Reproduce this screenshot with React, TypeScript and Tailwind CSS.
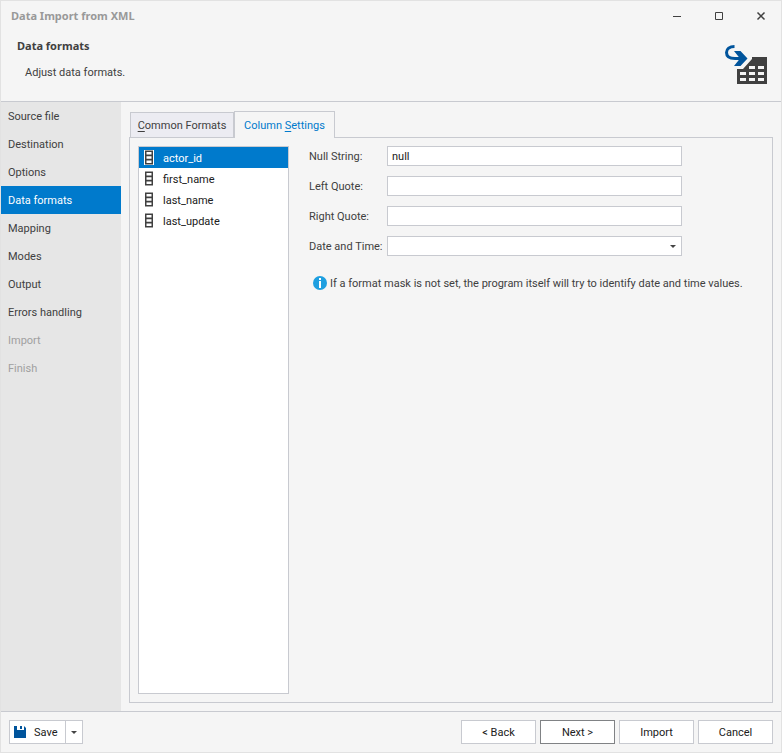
import clsx from "clsx";

const steps = [
  { name: "Source file" },
  { name: "Destination" },
  { name: "Options" },
  { name: "Data formats" },
  { name: "Mapping" },
  { name: "Modes" },
  { name: "Output" },
  { name: "Errors handling" },
  { name: "Import", disabled: true },
  { name: "Finish", disabled: true },
];

const columns = ["actor_id", "first_name", "last_name", "last_update"];

const textFields = [
  { id: "null-string", label: "Null String:", value: "null" },
  { id: "left-quote", label: "Left Quote:", value: "" },
  { id: "right-quote", label: "Right Quote:", value: "" },
];

const wizardButtons = ["< Back", "Next >", "Import", "Cancel"];

const ImportIcon = () => (
  <svg width="44" height="42" viewBox="0 0 44 42" aria-hidden="true">
    <path fill="#404040" d="M27 12H42V39H12V24H18L27 14Z" />
    <path
      fill="#f5f5f5"
      d="M24 21h6v3h-6zM33 21h6v3h-6zM15 27h6v3h-6zM24 27h6v3h-6zM33 27h6v3h-6zM15 33h6v3h-6zM24 33h6v3h-6zM33 33h6v3h-6z"
    />
    <path
      fill="none"
      stroke="#00549c"
      strokeWidth="3"
      d="M9.5 1.5C4.5 1.5 1.5 4 1.5 7.5C1.5 11.5 5 13.5 10 13.5H18"
    />
    <path fill="#00549c" d="M9 6H15.5L22.5 13.5L15.5 21H9L15 13.5Z" />
  </svg>
);

const ColumnIcon = ({ selected }: { selected: boolean }) => (
  <svg width="10" height="15" viewBox="0 0 10 15" aria-hidden="true">
    {selected && <path fill="#fff" d="M0 0h10v15H0z" />}
    <path fill="#404040" d="M1 0.500h8v14H1z" />
    <path fill="#fff" d="M2.5 2h5v2.500h-5zM2.5 6.200h5v2.500h-5zM2.5 10.400h5v2.500h-5z" />
  </svg>
);

const InfoIcon = () => (
  <svg
    className="shrink-0"
    width="14"
    height="14"
    viewBox="0 0 14 14"
    aria-hidden="true">
    <circle cx="7" cy="7" r="7" fill="#1e9fe0" />
    <path fill="#fff" d="M6 2h2v2H6zM6 5h2v7H6z" />
  </svg>
);

const SaveIcon = () => (
  <svg width="12" height="12" viewBox="0 0 12 12" aria-hidden="true">
    <path fill="#00549c" d="M0 0H3V4H10V0L12 2V12H0Z" />
    <path fill="#00549c" d="M6 0h2v3H6z" />
  </svg>
);

const Caret = () => (
  <svg width="6" height="3" viewBox="0 0 6 3" aria-hidden="true">
    <path fill="#444" d="M0 0h6L3 3z" />
  </svg>
);

const TitleBar = () => (
  <div className="flex h-[30px] items-center justify-between pl-2.5 pr-[15px]">
    <h1 className="font-['Noto_Sans',sans-serif] font-bold text-[#999]">
      Data Import from XML
    </h1>
    <div className="flex gap-8 text-[#404040]">
      <button type="button" aria-label="Minimize">
        <svg width="10" height="10" viewBox="0 0 10 10">
          <path fill="currentColor" d="M1 5h8v1H1z" />
        </svg>
      </button>
      <button type="button" aria-label="Maximize">
        <svg width="10" height="10" viewBox="0 0 10 10">
          <path fill="none" stroke="currentColor" d="M1.5 1.5h7v7h-7z" />
        </svg>
      </button>
      <button type="button" aria-label="Close">
        <svg width="10" height="10" viewBox="0 0 10 10">
          <path
            fill="none"
            stroke="currentColor"
            strokeWidth="1.5"
            d="M1.5 1.5l7 7M8.5 1.5l-7 7"
          />
        </svg>
      </button>
    </div>
  </div>
);

const Sidebar = () => (
  <nav className="w-[120px] shrink-0 bg-[#e6e6e6]">
    {steps.map((step) => (
      <button
        type="button"
        key={step.name}
        disabled={step.disabled}
        className={clsx(
          "block h-7 w-full pl-[7px] pt-0.5 text-left",
          step.name === "Data formats" && "bg-[#007acc] text-white",
          step.disabled && "text-[#a0a0a0]"
        )}>
        {step.name}
      </button>
    ))}
  </nav>
);

const SettingsForm = () => (
  <form className="flex min-w-0 flex-1 flex-col gap-2.5 pr-[82px]">
    {textFields.map((field) => (
      <div className="flex h-5 items-center" key={field.id}>
        <label
          htmlFor={field.id}
          className="w-[78px] shrink-0 whitespace-nowrap pt-0.5">
          {field.label}
        </label>
        <input
          id={field.id}
          type="text"
          defaultValue={field.value}
          className="h-5 w-full border border-[#c8cad0] bg-white px-1 text-[#202020]"
        />
      </div>
    ))}
    <div className="flex h-5 items-center">
      <label
        htmlFor="date-time"
        className="w-[78px] shrink-0 whitespace-nowrap pt-0.5">
        Date and Time:
      </label>
      <div className="relative w-full">
        <select
          id="date-time"
          className="block h-5 w-full appearance-none border border-[#c8cad0] bg-white px-1">
          <option value=""></option>
        </select>
        <span className="pointer-events-none absolute inset-y-0 right-1.5 flex items-center">
          <Caret />
        </span>
      </div>
    </div>
    <p className="mt-2 flex items-center gap-[3px] whitespace-nowrap pl-1">
      <InfoIcon />
      <span className="pt-0.5">
        If a format mask is not set, the program itself will try to identify
        date and time values.
      </span>
    </p>
  </form>
);

const App = () => {
  return (
    <div className="flex min-h-screen flex-col border border-[#e2e2e2] bg-[#f5f5f5] font-['Roboto',sans-serif] text-[11px] leading-4 text-[#404040]">
      <TitleBar />
      <header className="flex h-[71px] justify-between border-b border-[#c8cad0] pl-4 pr-3">
        <div className="pt-[7px]">
          <h2 className="font-['Noto_Sans',sans-serif] font-bold">Data formats</h2>
          <p className="mt-[11px] pl-2">Adjust data formats.</p>
        </div>
        <div className="pt-3.5">
          <ImportIcon />
        </div>
      </header>

      <div className="flex flex-1">
        <Sidebar />
        <main className="flex min-w-0 flex-1 flex-col px-2 pb-2 pt-[9px]">
          <div role="tablist" className="flex items-end">
            <button
              type="button"
              role="tab"
              aria-selected="false"
              className="ml-px h-[25px] w-[104px] border border-b-0 border-[#c8cad0] bg-[#ececf2] pt-0.5">
              <u className="underline-offset-2">C</u>ommon Formats
            </button>
            <button
              type="button"
              role="tab"
              aria-selected="true"
              className="relative -mb-px h-[27px] w-[101px] border border-b-0 border-[#c8cad0] bg-[#f5f5f5] pt-0.5 text-[#007acc]">
              Column <u className="underline-offset-2">S</u>ettings
            </button>
          </div>
          <section className="flex flex-1 gap-5 border border-[#c8cad0] p-2">
            <ul className="w-[151px] shrink-0 border border-[#c8cad0] bg-white text-[#202020]">
              {columns.map((column, index) => (
                <li key={column}>
                  <button
                    type="button"
                    className={clsx(
                      "flex h-[21px] w-full items-center gap-[9px] pl-[5px]",
                      index === 0 && "bg-[#007acc] text-white"
                    )}>
                    <ColumnIcon selected={index === 0} />
                    <span className="pt-0.5">{column}</span>
                  </button>
                </li>
              ))}
            </ul>
            <SettingsForm />
          </section>
        </main>
      </div>

      <footer className="flex justify-between border-t border-[#c8cad0] p-2 text-[#202020]">
        <div className="flex h-6 border border-[#c8cad0] bg-white">
          <button type="button" className="flex w-[55px] items-center gap-2 pl-1">
            <SaveIcon />
            <span className="pt-0.5">Save</span>
          </button>
          <button
            type="button"
            aria-label="Save options"
            className="flex w-[17px] items-center justify-center border-l border-[#c8cad0]">
            <Caret />
          </button>
        </div>
        <div className="flex gap-1">
          {wizardButtons.map((name) => (
            <button
              type="button"
              key={name}
              className={clsx(
                "h-6 w-[75px] border bg-white pt-0.5",
                name === "Next >" ? "border-[#808285]" : "border-[#c8cad0]"
              )}>
              {name}
            </button>
          ))}
        </div>
      </footer>
    </div>
  );
};

export default App;
